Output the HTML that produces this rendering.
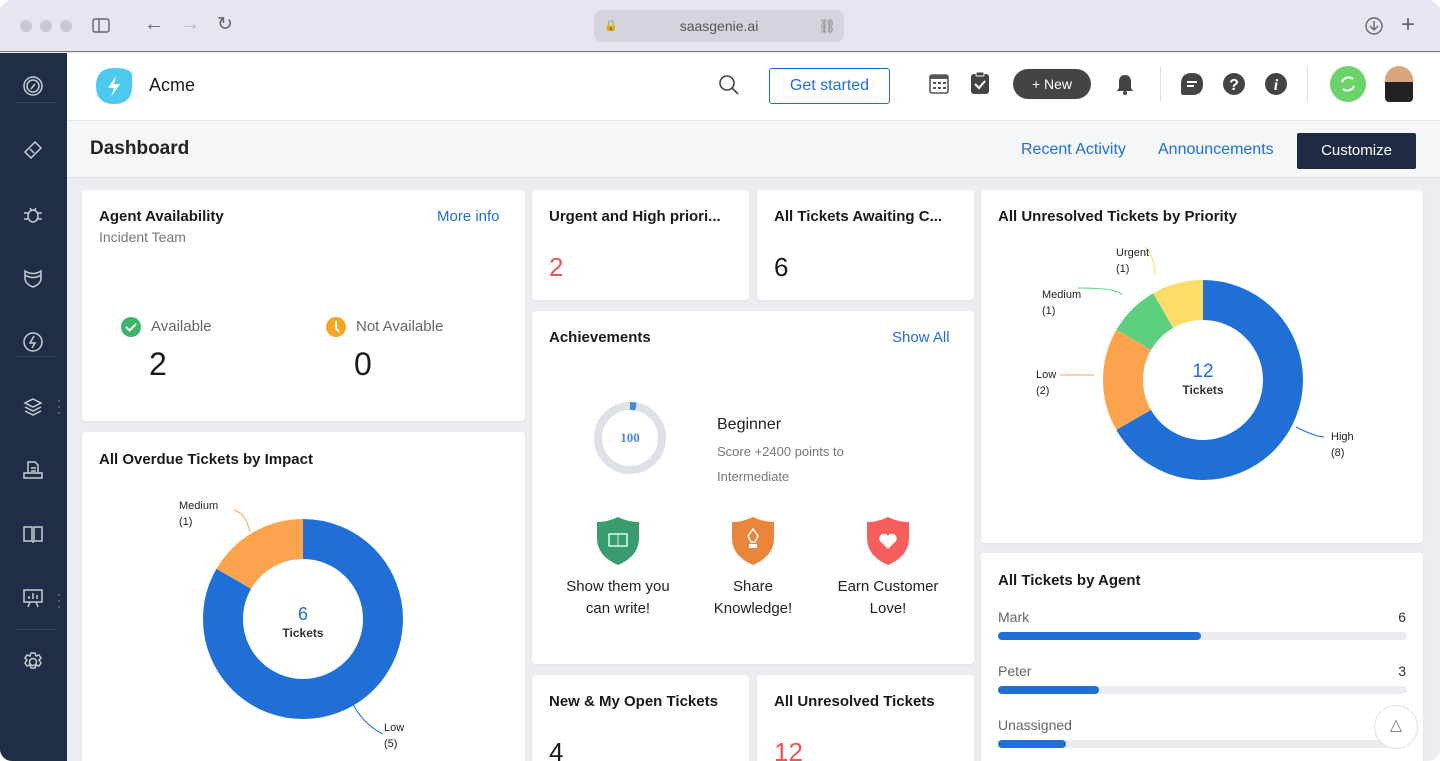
<!DOCTYPE html>
<html><head><meta charset="utf-8"><style>
*{box-sizing:border-box;margin:0;padding:0}
body{width:1440px;height:761px;overflow:hidden;background:#fff;font-family:"Liberation Sans",sans-serif;position:relative}
.win{position:absolute;left:0;top:0;width:1440px;height:761px;border-radius:12px;overflow:hidden;background:#ebedf0}
.chrome{position:absolute;left:0;top:0;width:1440px;height:52px;background:#e6e5f0;border-bottom:1px solid #77777d}
.dot{position:absolute;top:20px;width:12px;height:12px;border-radius:50%;background:#c9c8d0}
.url{position:absolute;left:594px;top:10px;width:250px;height:32px;border-radius:8px;background:#d5d4dc;font-size:14px;color:#555;text-align:center;line-height:32px}
.side{position:absolute;left:0;top:53px;width:67px;height:708px;background:#1f2d47}
.side svg{position:absolute;left:22px}
.sep{position:absolute;left:15px;width:40px;height:1px;background:#3a4660}
.hdr{position:absolute;left:67px;top:53px;right:0;height:68px;background:#fff;border-bottom:1px solid #e2e4e8}
.sub{position:absolute;left:67px;top:121px;right:0;height:57px;background:#f5f6f8;border-bottom:1px solid #e0e2e6}
.card{position:absolute;background:#fff;border-radius:4px;box-shadow:0 1px 2px rgba(0,0,0,.06)}
.t{position:absolute;font-size:15px;font-weight:bold;color:#1a1a1a;white-space:nowrap}
.blue{color:#1f6fd6}
.lbl{position:absolute;font-size:11px;color:#222;line-height:16px}
.bar{position:absolute;left:17px;width:409px;height:8px;border-radius:4px;background:#ebecef}
.bar i{position:absolute;left:0;top:0;height:8px;border-radius:4px;background:#1f6fd6}
</style></head><body><div class="win">
<div class="chrome">
<div class="dot" style="left:20px"></div><div class="dot" style="left:40px"></div><div class="dot" style="left:60px"></div>
<svg style="position:absolute;left:92px;top:18px" width="18" height="15"><rect x="1" y="1" width="16" height="13" rx="2" fill="none" stroke="#666" stroke-width="1.4"/><line x1="7" y1="1" x2="7" y2="14" stroke="#666" stroke-width="1.4"/></svg>
<div style="position:absolute;left:144px;top:13px;font-size:20px;color:#666">←</div>
<div style="position:absolute;left:180px;top:13px;font-size:20px;color:#bbb">→</div>
<div style="position:absolute;left:217px;top:13px;font-size:19px;color:#666">↻</div>
<div class="url"><span style="position:absolute;left:10px;font-size:11px">🔒</span>saasgenie.ai<span style="position:absolute;right:8px;color:#777">⛓</span></div>
<svg style="position:absolute;left:1365px;top:17px" width="18" height="18"><circle cx="9" cy="9" r="8" fill="none" stroke="#666" stroke-width="1.4"/><path d="M9 4v9M5 9l4 4 4-4" fill="none" stroke="#666" stroke-width="1.4"/></svg>
<div style="position:absolute;left:1401px;top:11px;font-size:24px;color:#666">+</div>
</div>
<div class="side">
<svg style="top:22px" width="22" height="22" fill="none" stroke="#c8ccd4" stroke-width="1.5"><circle cx="11" cy="11" r="9"/><circle cx="11" cy="11" r="6"/><path d="M9 14l4-5"/></svg>
<div class="sep" style="top:49px"></div>
<svg style="top:86px" width="22" height="22" fill="none" stroke="#c8ccd4" stroke-width="1.5"><path d="M3 13L13 3l6 6L9 19z"/><path d="M8 10l4 4"/></svg>
<svg style="top:151px" width="22" height="22" fill="none" stroke="#c8ccd4" stroke-width="1.5"><ellipse cx="11" cy="12" rx="5" ry="6"/><path d="M2 9h4M2 15h4M16 9h4M16 15h4M8 4l2 3M14 4l-2 3"/></svg>
<svg style="top:214px" width="22" height="22" fill="none" stroke="#c8ccd4" stroke-width="1.5"><path d="M3 4q8 5 16 0v7q0 6-8 9-8-3-8-9z"/><path d="M3 8q8 5 16 0"/></svg>
<svg style="top:278px" width="22" height="22" fill="none" stroke="#c8ccd4" stroke-width="1.5"><circle cx="11" cy="11" r="9"/><path d="M12 5l-4 7h5l-3 5"/></svg>
<div class="sep" style="top:303px"></div>
<svg style="top:343px" width="22" height="22" fill="none" stroke="#c8ccd4" stroke-width="1.5"><path d="M11 3l8 4-8 4-8-4z M3 11l8 4 8-4 M3 15l8 4 8-4"/></svg>
<div style="position:absolute;left:57px;top:344px;color:#aab;font-size:12px;line-height:6px">·<br>·<br>·</div>
<svg style="top:406px" width="22" height="22" fill="none" stroke="#c8ccd4" stroke-width="1.5"><path d="M6 3h7l3 3v8H6z M2 14h18v5H2z M9 9h5M9 12h5"/></svg>
<svg style="top:470px" width="22" height="22" fill="none" stroke="#c8ccd4" stroke-width="1.5"><path d="M2 4h8v14H2z M12 4h8v14h-8z M11 18v2"/></svg>
<svg style="top:534px" width="22" height="22" fill="none" stroke="#c8ccd4" stroke-width="1.5"><path d="M2 3h18v12H2z M7 12V9M11 12V6M15 12V8M8 15l-2 5M14 15l2 5"/></svg>
<div style="position:absolute;left:57px;top:538px;color:#aab;font-size:12px;line-height:6px">·<br>·<br>·</div>
<div class="sep" style="top:576px"></div>
<svg style="top:598px" width="22" height="22" fill="none" stroke="#c8ccd4" stroke-width="1.5"><circle cx="11" cy="11" r="3.5"/><path d="M9 2h4l1 3 3-1 2 3-2 2 2 3-2 3-3-1-1 3H9l-1-3-3 1-2-3 2-3-2-2 2-3 3 1z"/></svg>
</div>
<div class="hdr">
<svg style="position:absolute;left:27px;top:13px" width="40" height="40"><path d="M20 2Q38 2 38 10V20Q38 38 20 38Q2 38 2 20Q2 2 20 2z" fill="#4dc9f0"/><path d="M22 10l-8 12h6l-3 9 9-13h-6z" fill="#fff"/></svg>
<div style="position:absolute;left:82px;top:22px;font-size:18px;color:#1a1a1a">Acme</div>
<svg style="position:absolute;left:650px;top:20px" width="24" height="24" fill="none" stroke="#444" stroke-width="1.6"><circle cx="10" cy="10" r="7"/><path d="M15 15l6 6"/></svg>
<div style="position:absolute;left:702px;top:15px;width:121px;height:36px;border:1.5px solid #1f6fd6;border-radius:3px;color:#1f6fd6;font-size:16px;text-align:center;line-height:33px">Get started</div>
<svg style="position:absolute;left:862px;top:19px" width="20" height="22"><rect x="1" y="3" width="18" height="18" rx="2" fill="none" stroke="#555" stroke-width="1.6"/><rect x="1" y="3" width="18" height="4" fill="#555"/><g fill="#555"><rect x="4" y="10" width="3" height="2"/><rect x="9" y="10" width="3" height="2"/><rect x="14" y="10" width="3" height="2"/><rect x="4" y="15" width="3" height="2"/><rect x="9" y="15" width="3" height="2"/><rect x="14" y="15" width="3" height="2"/></g></svg>
<svg style="position:absolute;left:903px;top:18px" width="20" height="24"><rect x="1" y="3" width="18" height="20" rx="3" fill="#444"/><rect x="6" y="1" width="8" height="4" rx="1" fill="#444" stroke="#fff"/><path d="M5 13l4 4 6-7" fill="none" stroke="#fff" stroke-width="2"/></svg>
<div style="position:absolute;left:946px;top:16px;width:78px;height:30px;border-radius:15px;background:#444;color:#fff;font-size:14px;text-align:center;line-height:30px">+ New</div>
<svg style="position:absolute;left:1048px;top:20px" width="20" height="22"><path d="M10 2q6 0 6 7v6l2 3H2l2-3V9q0-7 6-7z" fill="#444"/><circle cx="10" cy="20" r="2" fill="#444"/></svg>
<div style="position:absolute;left:1093px;top:13px;width:1px;height:36px;background:#e2e2e2"></div>
<svg style="position:absolute;left:1113px;top:19px" width="24" height="24"><path d="M12 1q11 0 11 11t-11 11H3q-2 0-2-3V12Q1 1 12 1z" fill="#444"/><path d="M7 10h10M7 14h7" stroke="#fff" stroke-width="2"/></svg>
<svg style="position:absolute;left:1155px;top:19px" width="24" height="24"><circle cx="12" cy="12" r="11" fill="#444"/><text x="12" y="18" font-size="16" font-weight="bold" fill="#fff" text-anchor="middle" font-family="Liberation Sans">?</text></svg>
<svg style="position:absolute;left:1197px;top:19px" width="24" height="24"><circle cx="12" cy="12" r="11" fill="#444"/><text x="12" y="18" font-size="16" font-weight="bold" font-style="italic" fill="#fff" text-anchor="middle" font-family="Liberation Serif">i</text></svg>
<div style="position:absolute;left:1240px;top:13px;width:1px;height:36px;background:#e2e2e2"></div>
<div style="position:absolute;left:1263px;top:13px;width:36px;height:36px;border-radius:50%;background:#6ad46a"></div>
<svg style="position:absolute;left:1271px;top:21px" width="20" height="20" fill="none" stroke="#fff" stroke-width="2"><path d="M4 8a7 7 0 0 1 11-3M16 12a7 7 0 0 1-11 3"/></svg>
<div style="position:absolute;left:1318px;top:13px;width:28px;height:36px;border-radius:14px 14px 4px 4px;background:linear-gradient(#d9a57e 0 45%,#222 45%)"></div>
</div>
<div class="sub">
<div style="position:absolute;left:23px;top:17px;font-size:19px;font-weight:bold;color:#222">Dashboard</div>
<div style="position:absolute;left:954px;top:20px;font-size:16px;color:#1f6fd6">Recent Activity</div>
<div style="position:absolute;left:1091px;top:20px;font-size:16px;color:#1f6fd6">Announcements</div>
<div style="position:absolute;left:1230px;top:12px;width:119px;height:36px;background:#1f2a44;border-radius:2px;color:#fff;font-size:15px;text-align:center;line-height:36px">Customize</div>
</div>

<div class="card" style="left:82px;top:190px;width:443px;height:231px">
<div class="t" style="left:17px;top:18px">Agent Availability</div>
<div style="position:absolute;left:17px;top:39px;font-size:14px;color:#777">Incident Team</div>
<div class="t blue" style="left:355px;top:18px;font-weight:normal;font-size:15px">More info</div>
<svg style="position:absolute;left:39px;top:127px" width="20" height="20"><circle cx="10" cy="10" r="10" fill="#3bb56b"/><path d="M5 10l3.5 3.5L15 7" fill="none" stroke="#fff" stroke-width="2"/></svg>
<div style="position:absolute;left:69px;top:128px;font-size:15px;color:#666">Available</div>
<div style="position:absolute;left:67px;top:156px;font-size:32px;color:#1a1a1a">2</div>
<svg style="position:absolute;left:244px;top:127px" width="20" height="20"><circle cx="10" cy="10" r="10" fill="#f5a623"/><path d="M10 4v7l3 4" fill="none" stroke="#fff" stroke-width="2"/></svg>
<div style="position:absolute;left:274px;top:128px;font-size:15px;color:#666">Not Available</div>
<div style="position:absolute;left:272px;top:156px;font-size:32px;color:#1a1a1a">0</div>
</div>

<div class="card" style="left:82px;top:432px;width:443px;height:340px">
<div class="t" style="left:17px;top:19px">All Overdue Tickets by Impact</div>
<svg style="position:absolute;left:0;top:0" width="443" height="340">
<g transform="rotate(-90 221 187)">
<circle cx="221" cy="187" r="80" fill="none" stroke="#1f6fd6" stroke-width="40" stroke-dasharray="418.9 502.7"/>
<circle cx="221" cy="187" r="80" fill="none" stroke="#fca44d" stroke-width="40" stroke-dasharray="83.8 502.7" stroke-dashoffset="-418.9"/>
</g>
<path d="M152 78q12 4 16 22" fill="none" stroke="#fca44d"/>
<path d="M271 272q10 20 30 30" fill="none" stroke="#1f6fd6"/>
<text x="221" y="188" font-size="18" fill="#1f6fd6" text-anchor="middle" font-family="Liberation Sans">6</text>
<text x="221" y="205" font-size="12" font-weight="bold" fill="#333" text-anchor="middle" font-family="Liberation Sans">Tickets</text>
</svg>
<div class="lbl" style="left:97px;top:66px">Medium<br>(1)</div>
<div class="lbl" style="left:302px;top:288px">Low<br>(5)</div>
</div>

<div class="card" style="left:532px;top:190px;width:217px;height:110px">
<div class="t" style="left:17px;top:18px">Urgent and High priori...</div>
<div style="position:absolute;left:17px;top:62px;font-size:26px;color:#f05454">2</div></div>
<div class="card" style="left:757px;top:190px;width:217px;height:110px">
<div class="t" style="left:17px;top:18px">All Tickets Awaiting C...</div>
<div style="position:absolute;left:17px;top:62px;font-size:26px;color:#1a1a1a">6</div></div>

<div class="card" style="left:532px;top:311px;width:442px;height:353px">
<div class="t" style="left:17px;top:18px">Achievements</div>
<div class="t blue" style="left:360px;top:18px;font-weight:normal">Show All</div>
<svg style="position:absolute;left:60px;top:89px" width="76" height="76"><circle cx="38" cy="38" r="32" fill="none" stroke="#dfe1e8" stroke-width="8"/><circle cx="38" cy="38" r="32" fill="none" stroke="#4f86e0" stroke-width="8" stroke-dasharray="6 200" transform="rotate(-90 38 38)"/><text x="38" y="42" font-size="13" fill="#4f86e0" text-anchor="middle" font-family="Liberation Serif" font-weight="bold">100</text></svg>
<div style="position:absolute;left:185px;top:105px;font-size:16px;color:#222">Beginner</div>
<div style="position:absolute;left:185px;top:128px;font-size:13px;color:#777;line-height:25px">Score +2400 points to<br>Intermediate</div>
<svg style="position:absolute;left:64px;top:205px" width="44" height="50"><path d="M22 1q10 5 21 5v16q0 18-21 27Q1 40 1 22V6q11 0 21-5z" fill="#3a9b6f"/><rect x="13" y="18" width="18" height="12" fill="none" stroke="#cfe" stroke-width="1.5"/><line x1="22" y1="18" x2="22" y2="30" stroke="#cfe"/></svg>
<svg style="position:absolute;left:199px;top:205px" width="44" height="50"><path d="M22 1q10 5 21 5v16q0 18-21 27Q1 40 1 22V6q11 0 21-5z" fill="#e8853a"/><path d="M22 13l5 7-3 6h-4l-3-6z" fill="none" stroke="#fff" stroke-width="1.5"/><rect x="18" y="28" width="8" height="4" fill="#fff"/></svg>
<svg style="position:absolute;left:334px;top:205px" width="44" height="50"><path d="M22 1q10 5 21 5v16q0 18-21 27Q1 40 1 22V6q11 0 21-5z" fill="#f65e5e"/><path d="M22 33l-8-8a4.5 4.5 0 0 1 8-5 4.5 4.5 0 0 1 8 5z" fill="#fff"/></svg>
<div style="position:absolute;left:16px;top:265px;width:140px;text-align:center;font-size:15px;color:#222;line-height:22px">Show them you<br>can write!</div>
<div style="position:absolute;left:151px;top:265px;width:140px;text-align:center;font-size:15px;color:#222;line-height:22px">Share<br>Knowledge!</div>
<div style="position:absolute;left:286px;top:265px;width:140px;text-align:center;font-size:15px;color:#222;line-height:22px">Earn Customer<br>Love!</div>
</div>

<div class="card" style="left:532px;top:675px;width:217px;height:100px">
<div class="t" style="left:17px;top:18px">New &amp; My Open Tickets</div>
<div style="position:absolute;left:17px;top:62px;font-size:26px;color:#1a1a1a">4</div></div>
<div class="card" style="left:757px;top:675px;width:217px;height:100px">
<div class="t" style="left:17px;top:18px">All Unresolved Tickets</div>
<div style="position:absolute;left:17px;top:62px;font-size:26px;color:#f05454">12</div></div>

<div class="card" style="left:981px;top:190px;width:442px;height:353px">
<div class="t" style="left:17px;top:18px">All Unresolved Tickets by Priority</div>
<svg style="position:absolute;left:0;top:0" width="442" height="353">
<g transform="rotate(-90 222 190)">
<circle cx="222" cy="190" r="80" fill="none" stroke="#1f6fd6" stroke-width="40" stroke-dasharray="335.1 502.7"/>
<circle cx="222" cy="190" r="80" fill="none" stroke="#fca44d" stroke-width="40" stroke-dasharray="83.8 502.7" stroke-dashoffset="-335.1"/>
<circle cx="222" cy="190" r="80" fill="none" stroke="#5ccf7f" stroke-width="40" stroke-dasharray="41.9 502.7" stroke-dashoffset="-418.9"/>
<circle cx="222" cy="190" r="80" fill="none" stroke="#fddc69" stroke-width="40" stroke-dasharray="41.9 502.7" stroke-dashoffset="-460.8"/>
</g>
<path d="M79 185h34" stroke="#fca44d" fill="none"/>
<path d="M97 98q40 0 44 7" stroke="#5ccf7f" fill="none"/>
<path d="M164 57q10 10 10 28" stroke="#fddc69" fill="none"/>
<path d="M315 237q20 10 28 10" stroke="#1f6fd6" fill="none"/>
<text x="222" y="187" font-size="19" fill="#1f6fd6" text-anchor="middle" font-family="Liberation Sans">12</text>
<text x="222" y="204" font-size="12" font-weight="bold" fill="#333" text-anchor="middle" font-family="Liberation Sans">Tickets</text>
</svg>
<div class="lbl" style="left:135px;top:55px">Urgent<br>(1)</div>
<div class="lbl" style="left:61px;top:97px">Medium<br>(1)</div>
<div class="lbl" style="left:55px;top:177px">Low<br>(2)</div>
<div class="lbl" style="left:350px;top:239px">High<br>(8)</div>
</div>

<div class="card" style="left:981px;top:553px;width:442px;height:220px">
<div class="t" style="left:17px;top:19px">All Tickets by Agent</div>
<div style="position:absolute;left:17px;top:56px;font-size:14px;color:#666">Mark</div><div style="position:absolute;right:17px;top:56px;font-size:14px;color:#333">6</div>
<div class="bar" style="top:79px"><i style="width:203px"></i></div>
<div style="position:absolute;left:17px;top:110px;font-size:14px;color:#666">Peter</div><div style="position:absolute;right:17px;top:110px;font-size:14px;color:#333">3</div>
<div class="bar" style="top:133px"><i style="width:101px"></i></div>
<div style="position:absolute;left:17px;top:164px;font-size:14px;color:#666">Unassigned</div>
<div class="bar" style="top:187px"><i style="width:68px"></i></div>
</div>
<div style="position:absolute;left:1374px;top:705px;width:44px;height:44px;border-radius:50%;background:#fff;border:1px solid #ddd;text-align:center;line-height:40px;color:#777;font-size:16px">△</div>
</div></body></html>
